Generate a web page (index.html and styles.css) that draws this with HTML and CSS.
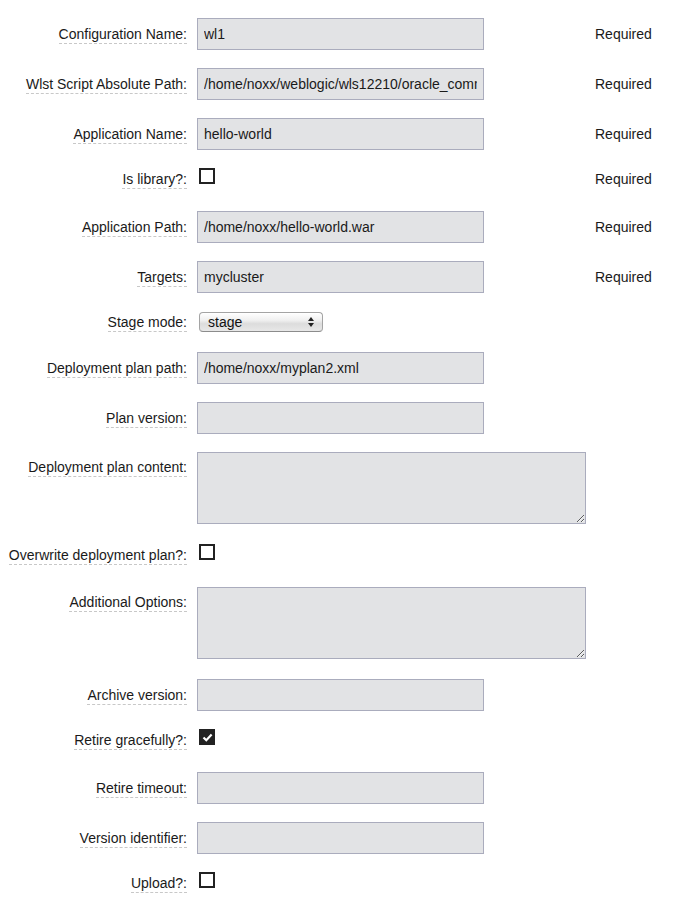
FILE: index.html
```html
<!DOCTYPE html>
<html>
<head>
<meta charset="utf-8">
<link rel="stylesheet" href="styles.css">
</head>
<body>
<div class="form">
  <div class="row r-input">
    <div class="label"><span>Configuration Name:</span></div>
    <div class="field"><input class="text" type="text" value="wl1"></div>
    <div class="req">Required</div>
  </div>
  <div class="row r-input">
    <div class="label"><span>Wlst Script Absolute Path:</span></div>
    <div class="field"><input class="text" type="text" value="/home/noxx/weblogic/wls12210/oracle_common/common/bin/wlst.sh"></div>
    <div class="req">Required</div>
  </div>
  <div class="row r-input">
    <div class="label"><span>Application Name:</span></div>
    <div class="field"><input class="text" type="text" value="hello-world"></div>
    <div class="req">Required</div>
  </div>
  <div class="row r-check">
    <div class="label"><span>Is library?:</span></div>
    <div class="field"><span class="cb"></span></div>
    <div class="req">Required</div>
  </div>
  <div class="row r-input">
    <div class="label"><span>Application Path:</span></div>
    <div class="field"><input class="text" type="text" value="/home/noxx/hello-world.war"></div>
    <div class="req">Required</div>
  </div>
  <div class="row r-input">
    <div class="label"><span>Targets:</span></div>
    <div class="field"><input class="text" type="text" value="mycluster"></div>
    <div class="req">Required</div>
  </div>
  <div class="row r-select">
    <div class="label"><span>Stage mode:</span></div>
    <div class="field">
      <div class="select">
        <span class="sel-text">stage</span>
        <svg class="sel-arrows" width="6" height="10" viewBox="0 0 6 10"><path d="M3 0 L6 4 L0 4 Z M0 6 L6 6 L3 10 Z" fill="#222"/></svg>
      </div>
    </div>
  </div>
  <div class="row r-input">
    <div class="label"><span>Deployment plan path:</span></div>
    <div class="field"><input class="text" type="text" value="/home/noxx/myplan2.xml"></div>
  </div>
  <div class="row r-input">
    <div class="label"><span>Plan version:</span></div>
    <div class="field"><input class="text" type="text" value=""></div>
  </div>
  <div class="row r-area">
    <div class="label"><span>Deployment plan content:</span></div>
    <div class="field"><textarea class="area"></textarea></div>
  </div>
  <div class="row r-check">
    <div class="label"><span>Overwrite deployment plan?:</span></div>
    <div class="field"><span class="cb"></span></div>
  </div>
  <div class="row r-area">
    <div class="label"><span>Additional Options:</span></div>
    <div class="field"><textarea class="area"></textarea></div>
  </div>
  <div class="row r-input">
    <div class="label"><span>Archive version:</span></div>
    <div class="field"><input class="text" type="text" value=""></div>
  </div>
  <div class="row r-check">
    <div class="label"><span>Retire gracefully?:</span></div>
    <div class="field"><span class="cb checked"><svg width="11" height="11" viewBox="0 0 11 11"><path d="M1.5 5.5 L4.3 8.2 L9.6 2.6" fill="none" stroke="#fff" stroke-width="2.2"/></svg></span></div>
  </div>
  <div class="row r-input">
    <div class="label"><span>Retire timeout:</span></div>
    <div class="field"><input class="text" type="text" value=""></div>
  </div>
  <div class="row r-input">
    <div class="label"><span>Version identifier:</span></div>
    <div class="field"><input class="text" type="text" value=""></div>
  </div>
  <div class="row r-check">
    <div class="label"><span>Upload?:</span></div>
    <div class="field"><span class="cb"></span></div>
  </div>
</div>
</body>
</html>
```
FILE: styles.css
```css
html, body {
  margin: 0;
  padding: 0;
  background: #fff;
}
body {
  font-family: "Liberation Sans", Arial, sans-serif;
  font-size: 14px;
  color: #1a1a1a;
}
.form {
  padding-top: 18px;
}
.row {
  display: grid;
  grid-template-columns: 187px 389px auto;
  column-gap: 10px;
  margin-bottom: 18px;
}
.label {
  text-align: right;
  white-space: nowrap;
}
.label span {
  border-bottom: 1px dashed #c8c8c8;
  padding-bottom: 1px;
}
.req {
  margin-left: -1px;
  white-space: nowrap;
}
.r-input { height: 32px; }
.r-input .label, .r-input .req { line-height: 32px; }
.r-check { height: 25px; }
.r-check .label, .r-check .req { line-height: 22px; }
.r-select { height: 23px; }
.r-select .label { line-height: 22px; }
.r-area { height: 74px; }
.r-area .label { line-height: 30px; }

.text {
  display: block;
  box-sizing: border-box;
  width: 287px;
  height: 32px;
  margin: 0;
  padding: 0 6px;
  border: 1px solid #aaacbd;
  background: #e2e3e5;
  font-family: "Liberation Sans", Arial, sans-serif;
  font-size: 14px;
  color: #1a1a1a;
  outline: none;
}
.area {
  display: block;
  box-sizing: border-box;
  width: 389px;
  height: 72px;
  margin: 0;
  border: 1px solid #aaacbd;
  background: #e2e3e5;
  font-family: "Liberation Sans", Arial, sans-serif;
  font-size: 14px;
  outline: none;
}
.cb {
  display: flex;
  align-items: center;
  justify-content: center;
  box-sizing: border-box;
  width: 16px;
  height: 16px;
  margin: 0 0 0 2px;
  border: 2px solid #222;
  background: #fff;
}
.cb.checked {
  background: #222;
}
.select {
  position: relative;
  box-sizing: border-box;
  width: 124px;
  height: 20px;
  margin: 1px 0 0 2px;
  border: 1px solid #a4a4a4;
  border-bottom-color: #8c8c8c;
  border-radius: 4px;
  background: linear-gradient(#ffffff 0%, #f0f0f0 40%, #dcdcdc 60%, #e8e8e8 100%);
  box-shadow: inset 0 1px 0 #fff;
  line-height: 18px;
  padding-left: 8px;
  color: #111;
}
.sel-arrows {
  position: absolute;
  right: 8px;
  top: 4px;
}
```
